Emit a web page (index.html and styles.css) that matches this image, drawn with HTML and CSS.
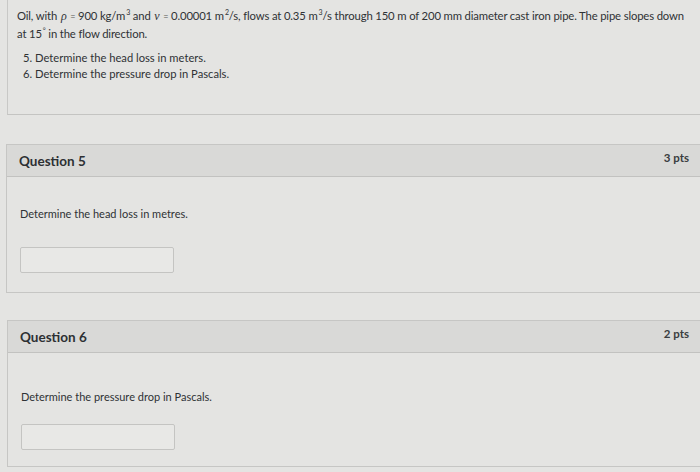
FILE: index.html
```html
<!DOCTYPE html>
<html>
<head>
<meta charset="utf-8">
<link rel="stylesheet" href="styles.css">
</head>
<body>
<div class="intro">
  <p class="lead">Oil, with <i class="m">ρ</i> <span class="eq">=</span> 900 kg/m<sup>3</sup> and <i class="m">ν</i> <span class="eq">=</span> 0.00001 m<sup>2</sup>/s, flows at 0.35 m<sup>3</sup>/s through 150 m of 200 mm diameter cast iron pipe. The pipe slopes down at 15<sup>°</sup> in the flow direction.</p>
  <ol class="list">
    <li>5. Determine the head loss in meters.</li>
    <li>6. Determine the pressure drop in Pascals.</li>
  </ol>
</div>

<div class="question">
  <div class="q-header">
    <span class="q-title">Question 5</span>
    <span class="q-pts">3 pts</span>
  </div>
  <div class="q-body">
    <p class="q-text">Determine the head loss in metres.</p>
    <div class="answer"></div>
  </div>
</div>

<div class="question q6">
  <div class="q-header">
    <span class="q-title">Question 6</span>
    <span class="q-pts">2 pts</span>
  </div>
  <div class="q-body">
    <p class="q-text">Determine the pressure drop in Pascals.</p>
    <div class="answer"></div>
  </div>
</div>
</body>
</html>
```

FILE: styles.css
```css
html, body {
  margin: 0;
  padding: 0;
}
body {
  background: #e4e4e2;
  font-family: Lato, "Open Sans", sans-serif;
  color: #2f3235;
  overflow: hidden;
  height: 472px;
}
.intro {
  margin-left: 7px;
  border-left: 1px solid #c8c8c6;
  border-bottom: 1px solid #c4c4c2;
  height: 100px;
  padding: 7px 0 7px 9px;
}
.lead {
  margin: 0;
  font-size: 11.3px;
  letter-spacing: -0.15px;
  line-height: 17px;
  width: 670px;
}
.lead .m {
  font-family: "Liberation Serif", serif;
  font-size: 12px;
  margin: 0 1px;
}
.lead .eq {
  font-size: 9px;
  color: #555;
}
sup {
  font-size: 7px;
  line-height: 0;
  vertical-align: 5px;
  margin-left: 1px;
}
.list {
  list-style: none;
  margin: 8px 0 0 6px;
  padding: 0;
  font-size: 11.2px;
  line-height: 16px;
}
.question {
  margin: 29px 0 0 6px;
  border: 1px solid #c6c6c4;
  border-right: none;
}
.question.q6 {
  margin-top: 27px;
  margin-left: 7px;
}
.q-header {
  display: flex;
  justify-content: space-between;
  align-items: center;
  height: 31px;
  background: #d9d9d7;
  border-bottom: 1px solid #c2c2c0;
  padding: 0 11px 0 12px;
}
.q-title {
  font-size: 13.5px;
  font-weight: 700;
  color: #2d3033;
}
.q-pts {
  font-size: 11.5px;
  font-weight: 700;
  color: #3a3d40;
  margin-top: -6px;
}
.q-body {
  padding: 29px 13px 19px;
}
.q-text {
  margin: 0;
  font-size: 11px;
  line-height: 16px;
}
.answer {
  margin-top: 25px;
  width: 152px;
  height: 24px;
  border: 1px solid #c4c4c2;
  background: #e8e8e6;
  border-radius: 2px;
}
.q6 .q-body {
  padding-top: 36px;
  padding-bottom: 16px;
}
.q6 .answer {
  margin-top: 19px;
}
```
